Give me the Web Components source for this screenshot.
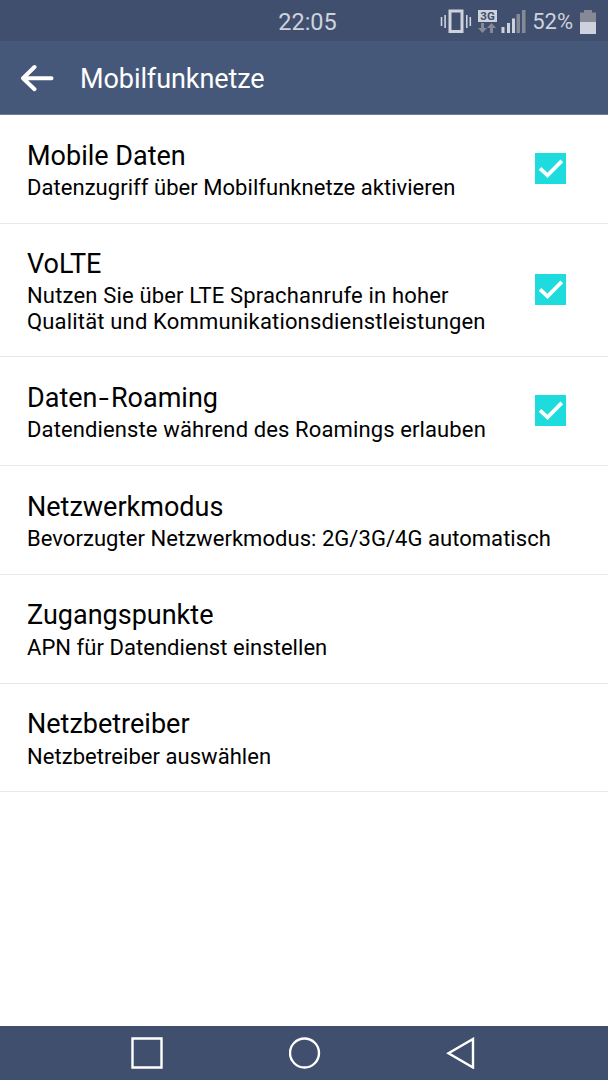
<!DOCTYPE html>
<html lang="de">
<head>
<meta charset="utf-8">
<title>Mobilfunknetze</title>
<style>
  body {
    margin: 0;
    background: #fff;
    font-family: Roboto, sans-serif;
  }
</style>
</head>
<body>
<settings-screen></settings-screen>

<script>
function define(name, html) {
  const template = document.createElement('template');
  template.innerHTML = html;
  customElements.define(name, class extends HTMLElement {
    constructor() {
      super();
      this.attachShadow({mode: 'open'}).appendChild(template.content.cloneNode(true));
    }
  });
}

define('status-bar', `
  <style>
    :host {
      display: grid;
      grid-template-columns: 1fr auto 1fr;
      align-items: center;
      height: 41px;
      background: #404f6e;
      color: #ced2dc;
      box-sizing: border-box;
      padding: 2px 12px 0 12px;
    }
    .time {
      grid-column: 2;
      font-size: 23.5px;
      line-height: 40px;
      margin-left: 7px;
    }
    .right {
      display: flex;
      align-items: center;
      justify-content: flex-end;
    }
    .battery {
      font-size: 22px;
      line-height: 40px;
      margin: 0 7px 0 6px;
    }
    svg { display: block; flex: none; }
  </style>
  <span class="time">22:05</span>
  <div class="right">
    <svg width="86" height="30" viewBox="440 6 86 30">
      <g fill="#ced2dc">
        <path d="M440.7 16h1.6v9h-1.6zM444.3 14h1.6v13h-1.6zM466 14h1.6v13H466zM469.5 16h1.6v9h-1.6z"/>
        <path fill-rule="evenodd" d="M448.5 8.5h15v23.5h-15zM451.5 11.5v17.5h9v-17.5z"/>
        <path d="M478 9h19v12h-19z"/>
        <path d="M501.5 26h3v6h-3zM507 22h3v10h-3zM512 17.5h3v14.5h-3z"/>
      </g>
      <path fill="#858a96" d="M516.5 13h3.5v19h-3.5zM522 9h3.5v23H522zM481 22h3v5h3l-4.5 5-4.5-5h3zM490 32v-5h-3l4.500-5 4.500 5h-3v5z"/>
      <text x="487.5" y="19" text-anchor="middle" font-size="11.5" font-weight="700" fill="#404f6e">3G</text>
    </svg>
    <span class="battery">52%</span>
    <svg width="16" height="24" viewBox="0 0 16 24">
      <path fill="#858a96" d="M4 0h8v2.5h4V12H0V2.5h4z"/>
      <path fill="#ced2dc" d="M0 12h16v12H0z"/>
    </svg>
  </div>
`);

define('title-bar', `
  <style>
    :host {
      display: flex;
      align-items: center;
      height: 74px;
      box-sizing: border-box;
      padding: 0 20px;
      background: #465879;
      border-bottom: 1px solid #6d7b95;
      color: #fff;
    }
    h1 {
      margin: 3px 0 0 26px;
      font-size: 27px;
      font-weight: 400;
      letter-spacing: -0.08px;
      line-height: 36px;
    }
    svg { display: block; }
  </style>
  <svg width="34" height="28" viewBox="0 0 34 28" fill="none" stroke="#fff" stroke-width="4" stroke-linecap="round" stroke-linejoin="round">
    <path d="M14.5 3 3 14.2l11.5 11M4 14.2h27.5"/>
  </svg>
  <h1><slot></slot></h1>
`);

define('check-box', `
  <style>
    :host {
      display: block;
      flex: none;
      width: 31px;
      height: 31px;
      margin-bottom: 2px;
      background: #1edcdd;
    }
    svg { display: block; }
  </style>
  <svg width="31" height="31" viewBox="0 0 31 31" fill="none" stroke="#fff" stroke-width="3.8">
    <path d="M5 15.3 12.5 22.3 26.8 7.8"/>
  </svg>
`);

define('setting-row', `
  <style>
    :host {
      display: flex;
      align-items: center;
      min-height: 108.8px;
      box-sizing: border-box;
      padding: 22px 42px 21px 27px;
      border-bottom: 1px solid #e9e9e9;
      color: #000;
    }
    .text { flex: 1; min-width: 0; }
    .title {
      padding-top: 1px;
      font-size: 27px;
      line-height: 34px;
      white-space: nowrap;
    }
    .summary {
      margin-top: 2.4px;
      font-size: 22px;
      line-height: 26px;
      letter-spacing: var(--summary-spacing, 0.045px);
      white-space: nowrap;
    }
  </style>
  <div class="text">
    <div class="title"><slot name="title"></slot></div>
    <div class="summary"><slot></slot></div>
  </div>
  <slot name="control"></slot>
`);

define('nav-bar', `
  <style>
    :host {
      display: flex;
      justify-content: space-between;
      align-items: center;
      height: 54px;
      box-sizing: border-box;
      padding: 0 133px 0 131px;
      background: #404f6e;
    }
    svg { display: block; }
  </style>
  <svg width="32" height="32" fill="none" stroke="#fff" stroke-width="2.4"><path d="M1.5 1.5h29v29h-29z"/></svg>
  <svg width="32" height="32" fill="none" stroke="#fff" stroke-width="2.4"><circle cx="15.5" cy="16" r="14.5"/></svg>
  <svg width="29" height="32" fill="none" stroke="#fff" stroke-width="2.4"><path d="M27 2v28.5L2.5 16.2z"/></svg>
`);

define('settings-screen', `
  <style>
    :host {
      display: flex;
      flex-direction: column;
      height: 1080px;
    }
    main { flex: 1; }
    .volte { --summary-spacing: 0.17px; }
    .roaming { --summary-spacing: 0.12px; }
    .hyphen {
      display: inline-block;
      padding: 0 3px;
      transform: scaleX(1.35);
    }
  </style>
  <status-bar></status-bar>
  <title-bar>Mobilfunknetze</title-bar>
  <main>
    <setting-row>
      <span slot="title">Mobile Daten</span>
      Datenzugriff über Mobilfunknetze aktivieren
      <check-box slot="control"></check-box>
    </setting-row>
    <setting-row class="volte">
      <span slot="title">VoLTE</span>
      Nutzen Sie über LTE Sprachanrufe in hoher<br>
      Qualität und Kommunikationsdienstleistungen
      <check-box slot="control"></check-box>
    </setting-row>
    <setting-row class="roaming">
      <span slot="title">Daten<span class="hyphen">-</span>Roaming</span>
      Datendienste während des Roamings erlauben
      <check-box slot="control"></check-box>
    </setting-row>
    <setting-row>
      <span slot="title">Netzwerkmodus</span>
      Bevorzugter Netzwerkmodus: 2G/3G/4G automatisch
    </setting-row>
    <setting-row>
      <span slot="title">Zugangspunkte</span>
      APN für Datendienst einstellen
    </setting-row>
    <setting-row>
      <span slot="title">Netzbetreiber</span>
      Netzbetreiber auswählen
    </setting-row>
  </main>
  <nav-bar></nav-bar>
`);
</script>
</body>
</html>
